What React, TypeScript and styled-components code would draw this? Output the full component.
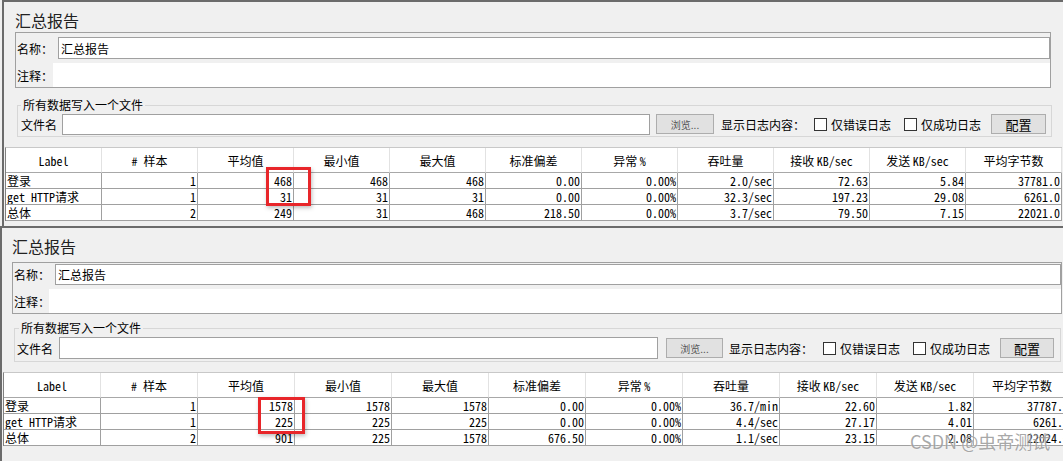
import React from "react";
import styled, { createGlobalStyle } from "styled-components";

const GlobalStyle = createGlobalStyle`
  html, body {
    margin: 0;
    padding: 0;
    background: #f0f0f0;
  }
  body {
    font-family: "Noto Sans CJK SC", "Noto Sans", sans-serif;
    font-size: 12px;
    color: #000;
  }
`;

type Metrics = {
  ml: number;
  height: number;
  titleTop: number;
  titleLeft: number;
  boxTop: number;
  boxLeft: number;
  boxWidth: number;
  boxPadTop: number;
  nameH: number;
  nameLabelW: number;
  noteLabelW: number;
  fsTop: number;
  fsLeft: number;
  fsWidth: number;
  fsPad: number;
  legendIndent: number;
  rowH: number;
  fileLabelW: number;
  fileInputW: number;
  fileInputH: number;
  browseGap: number;
  browseW: number;
  logGap: number;
  logW: number;
  check1W: number;
  check2W: number;
  cfgW: number;
  tableTop: number;
  tableLeft: number;
  col: number;
  mark: { left: number; top: number; w: number; h: number };
};

const top: Metrics = {
  ml: 2,
  height: 226,
  titleTop: 8,
  titleLeft: 11,
  boxTop: 2,
  boxLeft: 11,
  boxWidth: 1036,
  boxPadTop: 4,
  nameH: 22,
  nameLabelW: 42,
  noteLabelW: 37,
  fsTop: 10,
  fsLeft: 13,
  fsWidth: 1035,
  fsPad: 3,
  legendIndent: 0,
  rowH: 24,
  fileLabelW: 41,
  fileInputW: 588,
  fileInputH: 21,
  browseGap: 6,
  browseW: 58,
  logGap: 7,
  logW: 93,
  check1W: 73,
  check2W: 70,
  cfgW: 55,
  tableTop: 10,
  tableLeft: 1,
  col: 96,
  mark: { left: 260, top: 19, w: 45, h: 39 },
};

const bottom: Metrics = {
  ml: 0,
  height: 235,
  titleTop: 8,
  titleLeft: 10,
  boxTop: 6,
  boxLeft: 10,
  boxWidth: 1050,
  boxPadTop: 1,
  nameH: 21,
  nameLabelW: 42,
  noteLabelW: 36,
  fsTop: 7,
  fsLeft: 12,
  fsWidth: 1047,
  fsPad: 2,
  legendIndent: 2,
  rowH: 26,
  fileLabelW: 42,
  fileInputW: 599,
  fileInputH: 22,
  browseGap: 8,
  browseW: 57,
  logGap: 6,
  logW: 94,
  check1W: 73,
  check2W: 70,
  cfgW: 54,
  tableTop: 10,
  tableLeft: 1,
  col: 97,
  mark: { left: 254, top: 24, w: 47, h: 37 },
};

// header parts: ascii bits go in the mono font, the rest in the CJK font
const headers = [
  ["Label"],
  ["#\u00a0", "样本"],
  ["平均值"],
  ["最小值"],
  ["最大值"],
  ["标准偏差"],
  ["异常\u00a0", "%"],
  ["吞吐量"],
  ["接收\u00a0", "KB/sec"],
  ["发送\u00a0", "KB/sec"],
  ["平均字节数"],
];

const topRows = [
  ["登录", "1", "468", "468", "468", "0.00", "0.00%", "2.0/sec", "72.63", "5.84", "37781.0"],
  ["get HTTP请求", "1", "31", "31", "31", "0.00", "0.00%", "32.3/sec", "197.23", "29.08", "6261.0"],
  ["总体", "2", "249", "31", "468", "218.50", "0.00%", "3.7/sec", "79.50", "7.15", "22021.0"],
];

const bottomRows = [
  ["登录", "1", "1578", "1578", "1578", "0.00", "0.00%", "36.7/min", "22.60", "1.82", "37787.0"],
  ["get HTTP请求", "1", "225", "225", "225", "0.00", "0.00%", "4.4/sec", "27.17", "4.01", "6261.0"],
  ["总体", "2", "901", "225", "1578", "676.50", "0.00%", "1.1/sec", "23.15", "2.08", "22024.0"],
];

const Page = styled.div`
  position: relative;
  width: 1063px;
  height: 461px;
  overflow: hidden;
  background: #f0f0f0;
`;

const Panel = styled.section<{ $m: Metrics }>`
  box-sizing: border-box;
  margin-left: ${(p) => p.$m.ml}px;
  height: ${(p) => p.$m.height}px;
  border-top: 2px solid #6b6b6b;
  border-left: 2px solid #6b6b6b;
  display: flex;
  flex-direction: column;
  align-items: flex-start;
`;

const Title = styled.div<{ $m: Metrics }>`
  margin: ${(p) => p.$m.titleTop}px 0 0 ${(p) => p.$m.titleLeft}px;
  height: 20px;
  line-height: 20px;
  font-size: 16px;
  color: #222;
`;

const NameBox = styled.div<{ $m: Metrics }>`
  box-sizing: border-box;
  margin: ${(p) => p.$m.boxTop}px 0 0 ${(p) => p.$m.boxLeft}px;
  width: ${(p) => p.$m.boxWidth}px;
  padding-top: ${(p) => p.$m.boxPadTop}px;
  border: 1px solid #a0a0a0;
  display: flex;
  flex-direction: column;
  gap: 4px;
`;

const FieldRow = styled.div<{ $h: number }>`
  display: flex;
  align-items: stretch;
  height: ${(p) => p.$h}px;
`;

const FieldLabel = styled.span<{ $w: number }>`
  flex: none;
  width: ${(p) => p.$w}px;
  box-sizing: border-box;
  padding-left: 1px;
  display: flex;
  align-items: center;
  font-size: 12px;
  white-space: nowrap;
`;

const TextInput = styled.div`
  flex: 1;
  box-sizing: border-box;
  border: 1px solid #a0a0a0;
  background: #fff;
  padding-left: 2px;
  display: flex;
  align-items: center;
  font-size: 12px;
`;

const NoteArea = styled.div`
  flex: 1;
  background: #fff;
`;

const FileBox = styled.fieldset<{ $m: Metrics }>`
  box-sizing: border-box;
  margin: ${(p) => p.$m.fsTop}px 0 0 ${(p) => p.$m.fsLeft}px;
  width: ${(p) => p.$m.fsWidth}px;
  min-width: 0;
  padding: 0 ${(p) => p.$m.fsPad}px;
  border: 1px solid #d7d7d7;
`;

const Legend = styled.legend<{ $indent: number }>`
  margin-left: ${(p) => p.$indent}px;
  padding: 0 2px;
  line-height: 14px;
  font-size: 12px;
`;

const FileRow = styled.div<{ $h: number }>`
  display: flex;
  align-items: center;
  height: ${(p) => p.$h}px;
`;

const FileInput = styled.div<{ $w: number; $h: number }>`
  flex: none;
  box-sizing: border-box;
  width: ${(p) => p.$w}px;
  height: ${(p) => p.$h}px;
  border: 1px solid #a0a0a0;
  background: #fff;
`;

const Button = styled.div<{ $w: number; $gap: number; $small?: boolean }>`
  flex: none;
  box-sizing: border-box;
  width: ${(p) => p.$w}px;
  height: 20px;
  margin-left: ${(p) => p.$gap}px;
  border: 1px solid #adadad;
  background: #e1e1e1;
  display: flex;
  align-items: center;
  justify-content: center;
  font-size: ${(p) => (p.$small ? 10 : 13)}px;
  color: ${(p) => (p.$small ? "#555" : "#000")};
`;

const Text = styled.span<{ $w: number; $gap?: number }>`
  flex: none;
  width: ${(p) => p.$w}px;
  margin-left: ${(p) => p.$gap ?? 0}px;
  font-size: 12px;
  white-space: nowrap;
`;

const Check = styled.span`
  flex: none;
  box-sizing: border-box;
  width: 13px;
  height: 13px;
  margin-right: 4px;
  border: 1px solid #333;
  background: #fff;
`;

const Table = styled.div<{ $m: Metrics }>`
  position: relative;
  margin: ${(p) => p.$m.tableTop}px 0 0 ${(p) => p.$m.tableLeft}px;
  display: grid;
  grid-template-columns: repeat(11, ${(p) => p.$m.col}px);
  border-top: 1px solid #c8c8c8;
  border-left: 1px solid #808080;
`;

const HeadCell = styled.div`
  box-sizing: border-box;
  height: 25px;
  background: #fff;
  border-right: 1px solid #e2e2e2;
  border-bottom: 1px solid #a8a8a8;
  display: flex;
  align-items: center;
  justify-content: center;
  font-size: 12px;
  white-space: pre;
`;

const Cell = styled.div<{ $left?: boolean }>`
  box-sizing: border-box;
  height: 16px;
  padding: 0 1px;
  background: #fff;
  border-right: 1px solid #a0a0a0;
  border-bottom: 1px solid #a0a0a0;
  display: flex;
  align-items: center;
  justify-content: ${(p) => (p.$left ? "flex-start" : "flex-end")};
  font-family: "Noto Sans Mono CJK SC", "Liberation Mono", "Noto Sans CJK SC", monospace;
  font-size: 12px;
  line-height: 15px;
  white-space: pre;
  overflow: hidden;
`;

const Mono = styled.span`
  font-family: "Noto Sans Mono CJK SC", "Liberation Mono", monospace;
`;

const Mark = styled.div`
  position: absolute;
  box-sizing: border-box;
  border: 3px solid #e8262a;
  box-shadow: 1px 2px 4px rgba(0, 0, 0, 0.25);
  pointer-events: none;
`;

const Watermark = styled.div`
  position: absolute;
  left: 910px;
  top: 428px;
  font-size: 18px;
  color: rgba(140, 140, 140, 0.75);
  text-shadow: 0 0 2px rgba(255, 255, 255, 0.9);
  white-space: nowrap;
`;

const Report = ({ m, rows }: { m: Metrics; rows: string[][] }) => (
  <Panel $m={m}>
    <Title $m={m}>汇总报告</Title>
    <NameBox $m={m}>
      <FieldRow $h={m.nameH}>
        <FieldLabel $w={m.nameLabelW}>名称：</FieldLabel>
        <TextInput>汇总报告</TextInput>
      </FieldRow>
      <FieldRow $h={24}>
        <FieldLabel $w={m.noteLabelW}>注释：</FieldLabel>
        <NoteArea />
      </FieldRow>
    </NameBox>
    <FileBox $m={m}>
      <Legend $indent={m.legendIndent}>所有数据写入一个文件</Legend>
      <FileRow $h={m.rowH}>
        <Text $w={m.fileLabelW}>文件名</Text>
        <FileInput $w={m.fileInputW} $h={m.fileInputH} />
        <Button $w={m.browseW} $gap={m.browseGap} $small>
          浏览...
        </Button>
        <Text $w={m.logW} $gap={m.logGap}>
          显示日志内容：
        </Text>
        <Check />
        <Text $w={m.check1W}>仅错误日志</Text>
        <Check />
        <Text $w={m.check2W}>仅成功日志</Text>
        <Button $w={m.cfgW} $gap={0}>
          配置
        </Button>
      </FileRow>
    </FileBox>
    <Table $m={m}>
      {headers.map((h, i) => (
        <HeadCell key={i}>
          {h.map((part, j) =>
            /[A-Za-z#%]/.test(part) ? <Mono key={j}>{part}</Mono> : <span key={j}>{part}</span>
          )}
        </HeadCell>
      ))}
      {rows.map((r, ri) =>
        r.map((v, ci) => (
          <Cell key={`${ri}-${ci}`} $left={ci === 0}>
            {v}
          </Cell>
        ))
      )}
      <Mark
        style={{ left: m.mark.left, top: m.mark.top, width: m.mark.w, height: m.mark.h }}
      />
    </Table>
  </Panel>
);

export default function App() {
  return (
    <Page>
      <GlobalStyle />
      <Report m={top} rows={topRows} />
      <Report m={bottom} rows={bottomRows} />
      <Watermark>CSDN @虫帝测试</Watermark>
    </Page>
  );
}
